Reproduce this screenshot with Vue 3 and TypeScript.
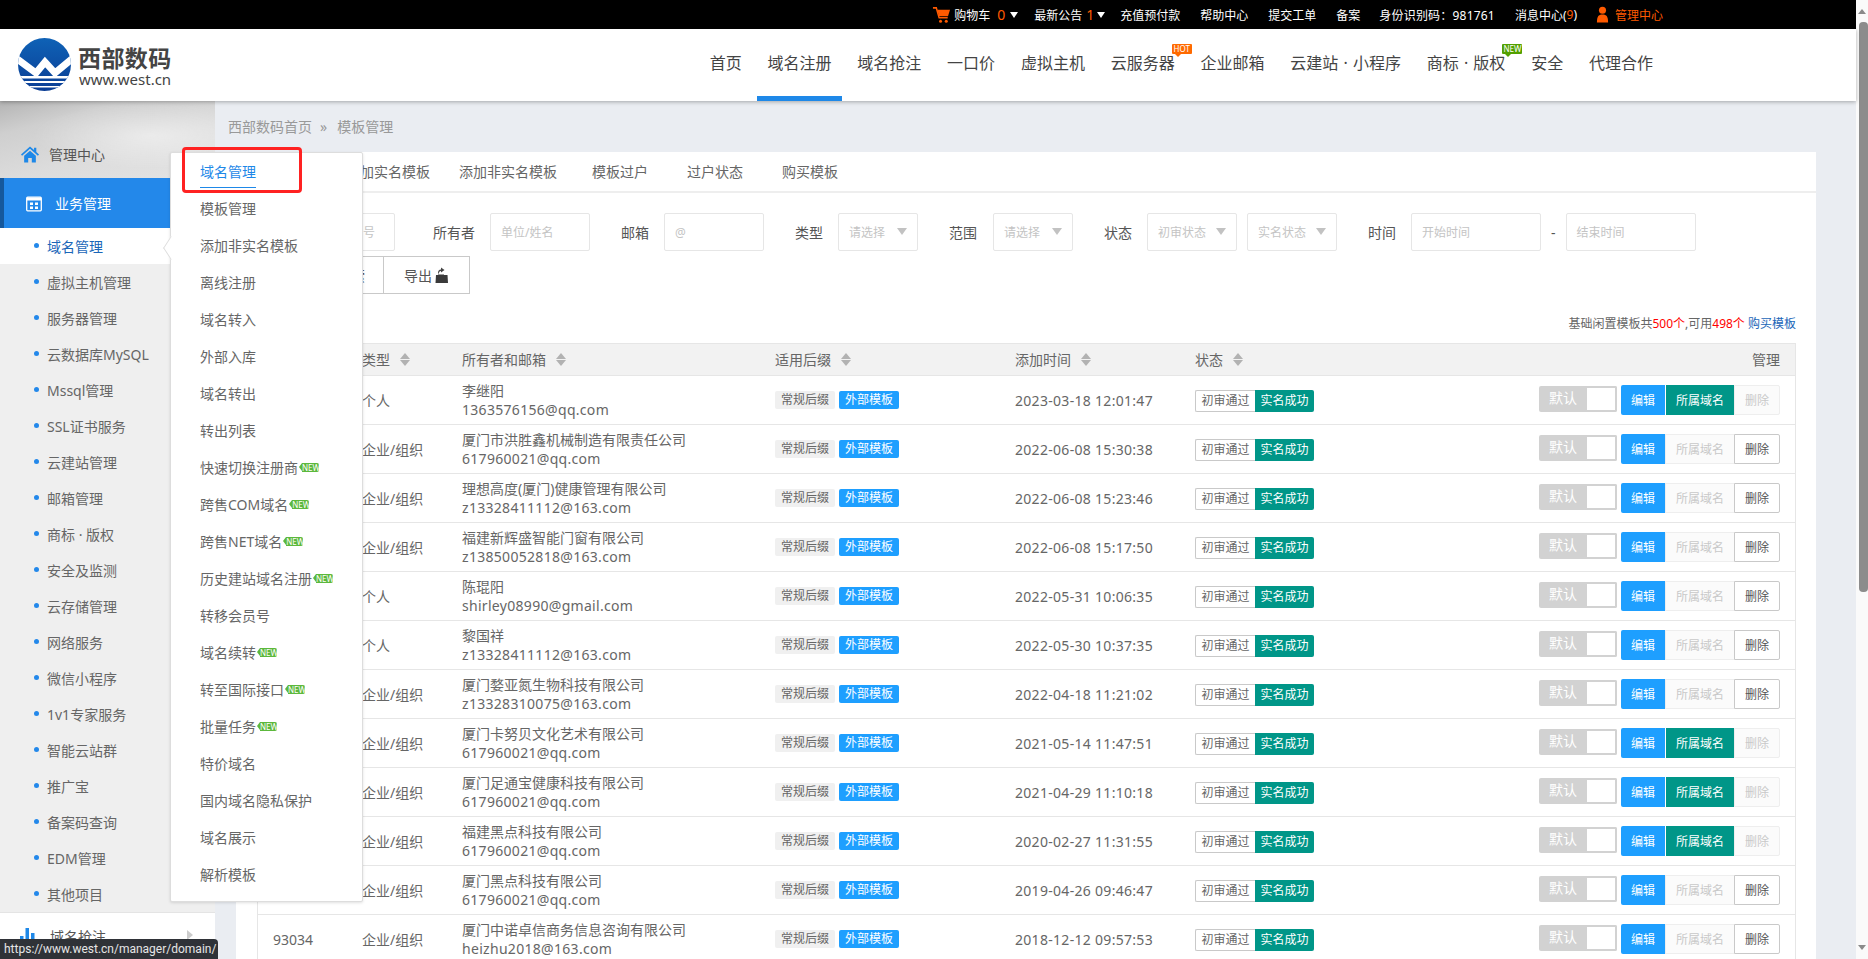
<template>
  <div class="page">
    <div class="site">
      <div class="topbar">
        <a class="top-item top-cart">
          <svg class="cart" viewBox="0 0 20 18" width="19" height="18">
            <path d="M1 1.500h3.500l3 10.500h9" fill="none" stroke="#ff5a00" stroke-width="1.600" />
            <path d="M5.500 3.500h13.500l-2.200 6.800H7.500z" fill="#ff5a00" />
            <circle cx="9" cy="15.500" r="1.600" fill="#ff5a00" />
            <circle cx="15" cy="15.500" r="1.600" fill="#ff5a00" />
          </svg>
          购物车<em class="count">0</em><i class="tri"></i>
        </a>
        <a class="top-item top-notice">最新公告<em class="count">1</em><i class="tri"></i></a>
        <a v-for="item in topLinks" :key="item" class="top-item">{{ item }}</a>
        <a class="top-item top-id">身份识别码：981761</a>
        <a class="top-item">消息中心(<span class="msg">9</span>)</a>
        <a class="top-item top-user">
          <svg viewBox="0 0 14 18" width="13" height="17">
            <circle cx="7" cy="4.500" r="3.800" fill="#ff5a00" />
            <path d="M1 17.500c0-6 1.500-8.500 6-8.500s6 2.500 6 8.500z" fill="#ff5a00" />
          </svg>
          管理中心
        </a>
      </div>

      <header class="header">
        <div class="logo">
          <svg class="logo-mark" viewBox="0 0 53 53" width="53" height="53">
            <defs>
              <clipPath id="logoClip"><circle cx="26.500" cy="26.500" r="26.500" /></clipPath>
              <linearGradient id="logoFill" x1="0" y1="0" x2="0" y2="1">
                <stop offset="0" stop-color="#0f62b6" />
                <stop offset="1" stop-color="#0a3d94" />
              </linearGradient>
            </defs>
            <g clip-path="url(#logoClip)">
              <rect width="53" height="53" fill="url(#logoFill)" />
              <path d="M-2 20l20 15 9-11 10 11 18-15" fill="none" stroke="#fff" stroke-width="7" />
              <rect y="38" width="53" height="2.500" fill="#fff" />
              <rect y="43" width="53" height="2" fill="#fff" />
              <rect y="48" width="53" height="1.500" fill="#fff" />
            </g>
          </svg>
          <div class="logo-text">
            <strong>西部数码</strong>
            <span>www.west.cn</span>
          </div>
        </div>
        <nav class="nav">
          <a v-for="item in navItems" :key="item.label" :class="['nav-item', { active: item.active }]">
            {{ item.label }}
            <b v-if="item.badge" :class="['nav-badge', `badge-${item.badge}`]">{{ item.badge }}</b>
          </a>
        </nav>
      </header>

      <div class="body">
        <aside class="sidebar">
          <div class="side-top">
            <div class="side-home">
              <svg viewBox="0 0 20 18" width="18" height="17">
                <path d="M10 0L0 9l1.200 1.300L10 2.500l8.800 7.800L20 9l-3-2.700V1.500h-2.500v2.600z" fill="#1e88e8" />
                <path d="M3.500 10.500L10 4.800l6.500 5.700V18H12v-5H8v5H3.500z" fill="#1e88e8" />
              </svg>
              管理中心
            </div>
          </div>
          <div class="side-group">
            <svg viewBox="0 0 16 16" width="16" height="17">
              <rect x="0.700" y="1.700" width="14.600" height="13.600" rx="1" fill="none" stroke="#fff" stroke-width="1.300" />
              <rect x="1" y="2" width="14" height="3" fill="#fff" />
              <rect x="4" y="7" width="3" height="2.500" fill="#fff" />
              <rect x="9" y="7" width="3" height="2.500" fill="#fff" />
              <rect x="4" y="11" width="3" height="2.500" fill="#fff" />
              <rect x="9" y="11" width="3" height="2.500" fill="#fff" />
            </svg>
            业务管理
          </div>
          <ul class="side-list">
            <li v-for="(item, i) in sideItems" :key="item" :class="{ current: i === 0 }">{{ item }}</li>
          </ul>
          <div class="side-next">
            <svg viewBox="0 0 18 16" width="18" height="16">
              <rect x="0" y="8" width="3.500" height="8" fill="#1e88e8" />
              <rect x="5.500" y="0" width="3.500" height="16" fill="#1e88e8" />
              <rect x="11" y="5" width="3.500" height="11" fill="#1e88e8" />
            </svg>
            域名抢注
            <i class="side-arrow"></i>
          </div>
        </aside>

        <main class="main">
          <div class="crumbs">
            <span>西部数码首页</span>
            <span class="crumb-sep">»</span>
            <span>模板管理</span>
          </div>

          <section class="panel">
            <div class="tabs">
              <a v-for="tab in tabs" :key="tab" class="tab">{{ tab }}</a>
            </div>

            <div class="filters">
              <div class="field field-first">
                <span class="fake-input w-id">模板编号</span>
              </div>
              <div class="field">
                <label>所有者</label>
                <span class="fake-input w-100">单位/姓名</span>
              </div>
              <div class="field">
                <label>邮箱</label>
                <span class="fake-input w-100">@</span>
              </div>
              <div class="field">
                <label>类型</label>
                <span class="fake-input fake-select w-80">请选择</span>
              </div>
              <div class="field field-range">
                <label>范围</label>
                <span class="fake-input fake-select w-80">请选择</span>
              </div>
              <div class="field">
                <label>状态</label>
                <span class="fake-input fake-select w-90">初审状态</span>
                <span class="fake-input fake-select w-90 tight">实名状态</span>
              </div>
              <div class="field">
                <label>时间</label>
                <span class="fake-input w-130">开始时间</span>
                <span class="dash">-</span>
                <span class="fake-input w-130">结束时间</span>
              </div>
            </div>

            <div class="actions">
              <button class="action-btn search-btn">搜索</button>
              <button class="action-btn export-btn">
                导出
                <svg viewBox="0 0 14 16" width="14" height="16">
                  <path d="M6 0.500l3.500 2.500-3.500 2.500V4C4.500 4 4 5 4 6.500H3C3 3.500 4 2.500 6 2.500z" fill="#444" />
                  <path d="M1 8h2v-.5h6V8h3.500l.5 8H0.500z" fill="#3a3a3a" />
                </svg>
              </button>
            </div>

            <p class="quota">
              基础闲置模板共<span class="red">500个</span>,可用<span class="red">498个</span>{{ ' ' }}<a class="buy">购买模板</a>
            </p>

            <div class="table-wrap">
              <table class="grid">
                <colgroup>
                  <col class="c-id" />
                  <col class="c-type" />
                  <col class="c-owner" />
                  <col class="c-suffix" />
                  <col class="c-time" />
                  <col class="c-status" />
                  <col />
                </colgroup>
                <thead>
                  <tr>
                    <th v-for="col in columns" :key="col">
                      <span class="th-inner">{{ col }}<i class="sort"></i></span>
                    </th>
                    <th class="th-manage">管理</th>
                  </tr>
                </thead>
                <tbody>
                  <tr v-for="(row, i) in rows" :key="i">
                    <td>{{ row.id }}</td>
                    <td>{{ row.type }}</td>
                    <td class="owner">
                      <div>{{ row.name }}</div>
                      <div class="latin">{{ row.email }}</div>
                    </td>
                    <td>
                      <span class="tag tag-gray">常规后缀</span>
                      <span class="tag tag-blue">外部模板</span>
                    </td>
                    <td class="latin">{{ row.time }}</td>
                    <td>
                      <div class="status-cell">
                        <span class="st st-line">初审通过</span>
                        <span class="st st-ok">实名成功</span>
                      </div>
                    </td>
                    <td>
                      <div class="manage">
                        <span class="switch"><b>默认</b><i></i></span>
                        <div class="btns">
                          <a class="btn btn-blue">编辑</a>
                          <template v-if="row.bound">
                            <a class="btn btn-green">所属域名</a>
                            <a class="btn btn-off">删除</a>
                          </template>
                          <template v-else>
                            <a class="btn btn-off btn-mid">所属域名</a>
                            <a class="btn btn-line">删除</a>
                          </template>
                        </div>
                      </div>
                    </td>
                  </tr>
                </tbody>
              </table>
            </div>
          </section>
        </main>

        <!-- 悬浮子菜单 -->
        <div class="flyout">
          <i class="flyout-arrow"></i>
          <a v-for="(item, i) in flyoutItems" :key="item.label" class="fly-item">
            <span :class="{ 'fly-current': i === 0 }">{{ item.label }}</span>
            <b v-if="item.isNew" class="new-tag">NEW</b>
          </a>
        </div>
        <div class="mark-box"></div>
      </div>
    </div>

    <div class="scrollbar">
      <i class="sb-up"></i>
      <i class="sb-thumb"></i>
      <i class="sb-down"></i>
    </div>

    <div class="status-url">https://www.west.cn/manager/domain/</div>
  </div>
</template>

<script setup lang="ts">
interface NavItem {
  label: string;
  active?: boolean;
  badge?: 'HOT' | 'NEW';
}

interface Row {
  id: string;
  type: string;
  name: string;
  email: string;
  time: string;
  bound: boolean;
}

const topLinks = ['充值预付款', '帮助中心', '提交工单', '备案'];

const navItems: NavItem[] = [
  { label: '首页' },
  { label: '域名注册', active: true },
  { label: '域名抢注' },
  { label: '一口价' },
  { label: '虚拟主机' },
  { label: '云服务器', badge: 'HOT' },
  { label: '企业邮箱' },
  { label: '云建站 · 小程序' },
  { label: '商标 · 版权', badge: 'NEW' },
  { label: '安全' },
  { label: '代理合作' }
];

const sideItems = [
  '域名管理', '虚拟主机管理', '服务器管理', '云数据库MySQL', 'Mssql管理', 'SSL证书服务', '云建站管理',
  '邮箱管理', '商标 · 版权', '安全及监测', '云存储管理', '网络服务', '微信小程序', '1v1专家服务',
  '智能云站群', '推广宝', '备案码查询', 'EDM管理', '其他项目'
];

const flyoutItems = [
  { label: '域名管理' },
  { label: '模板管理' },
  { label: '添加非实名模板' },
  { label: '离线注册' },
  { label: '域名转入' },
  { label: '外部入库' },
  { label: '域名转出' },
  { label: '转出列表' },
  { label: '快速切换注册商', isNew: true },
  { label: '跨售COM域名', isNew: true },
  { label: '跨售NET域名', isNew: true },
  { label: '历史建站域名注册', isNew: true },
  { label: '转移会员号' },
  { label: '域名续转', isNew: true },
  { label: '转至国际接口', isNew: true },
  { label: '批量任务', isNew: true },
  { label: '特价域名' },
  { label: '国内域名隐私保护' },
  { label: '域名展示' },
  { label: '解析模板' }
];

const tabs = ['模板管理', '添加实名模板', '添加非实名模板', '模板过户', '过户状态', '购买模板'];
const columns = ['ID', '类型', '所有者和邮箱', '适用后缀', '添加时间', '状态'];

const rows: Row[] = [
  { id: '', type: '个人', name: '李继阳', email: '1363576156@qq.com', time: '2023-03-18 12:01:47', bound: true },
  { id: '', type: '企业/组织', name: '厦门市洪胜鑫机械制造有限责任公司', email: '617960021@qq.com', time: '2022-06-08 15:30:38', bound: false },
  { id: '', type: '企业/组织', name: '理想高度(厦门)健康管理有限公司', email: 'z13328411112@163.com', time: '2022-06-08 15:23:46', bound: false },
  { id: '', type: '企业/组织', name: '福建新辉盛智能门窗有限公司', email: 'z13850052818@163.com', time: '2022-06-08 15:17:50', bound: false },
  { id: '', type: '个人', name: '陈琨阳', email: 'shirley08990@gmail.com', time: '2022-05-31 10:06:35', bound: false },
  { id: '', type: '个人', name: '黎国祥', email: 'z13328411112@163.com', time: '2022-05-30 10:37:35', bound: false },
  { id: '', type: '企业/组织', name: '厦门婺亚氮生物科技有限公司', email: 'z13328310075@163.com', time: '2022-04-18 11:21:02', bound: false },
  { id: '', type: '企业/组织', name: '厦门卡努贝文化艺术有限公司', email: '617960021@qq.com', time: '2021-05-14 11:47:51', bound: true },
  { id: '', type: '企业/组织', name: '厦门足通宝健康科技有限公司', email: '617960021@qq.com', time: '2021-04-29 11:10:18', bound: true },
  { id: '', type: '企业/组织', name: '福建黑点科技有限公司', email: '617960021@qq.com', time: '2020-02-27 11:31:55', bound: true },
  { id: '', type: '企业/组织', name: '厦门黑点科技有限公司', email: '617960021@qq.com', time: '2019-04-26 09:46:47', bound: false },
  { id: '93034', type: '企业/组织', name: '厦门中诺卓信商务信息咨询有限公司', email: 'heizhu2018@163.com', time: '2018-12-12 09:57:53', bound: false }
];
</script>

<style>
html,
body {
  margin: 0;
  overflow: hidden;
}
</style>

<style scoped>
* {
  box-sizing: border-box;
}

.page {
  position: relative;
  display: flex;
  height: 959px;
  overflow: hidden;
  font-family: "Noto Sans", "Noto Sans CJK SC", sans-serif;
  font-size: 14px;
  color: #666;
}

.site {
  display: flex;
  flex-direction: column;
  width: 1856px;
  flex: none;
}

/* 顶部黑条 */
.topbar {
  display: flex;
  align-items: center;
  justify-content: flex-end;
  gap: 20px;
  height: 29px;
  padding-right: 193px;
  background: #000;
  color: #fff;
  font-size: 12px;
  flex: none;
}

.top-item {
  display: flex;
  align-items: center;
  white-space: nowrap;
}

.top-cart {
  margin-right: -4px;
}

.top-notice {
  margin-right: -5px;
}

.top-notice .count {
  margin-left: 4px;
}

.top-notice .tri {
  margin-left: 3px;
}

.top-id {
  margin-left: -1px;
  letter-spacing: 0.2px;
}

.cart {
  margin-right: 3px;
}

.count {
  margin-left: 7px;
  color: #ff5a00;
  font-style: normal;
  font-size: 14px;
}

.tri {
  width: 0;
  height: 0;
  margin-left: 5px;
  border-left: 4px solid transparent;
  border-right: 4px solid transparent;
  border-top: 6px solid #fff;
}

.msg {
  color: #ff5a00;
}

.top-user {
  margin-left: -1px;
  color: #ff5a00;
  gap: 6px;
}

/* 头部导航 */
.header {
  position: relative;
  z-index: 3;
  display: flex;
  justify-content: space-between;
  height: 72px;
  padding-right: 193px;
  background: #fff;
  box-shadow: 0 1px 4px rgba(0, 0, 0, 0.3);
  flex: none;
}

.logo {
  display: flex;
  align-items: center;
  gap: 7px;
  padding-left: 18px;
}

.logo-mark {
  margin-top: -1px;
}

.logo-text {
  display: flex;
  flex-direction: column;
  color: #444;
}

.logo-text strong {
  font-size: 23px;
  line-height: 28px;
  letter-spacing: 0.4px;
}

.logo-text span {
  padding-left: 1px;
  font-size: 15px;
  line-height: 15px;
}

.nav {
  display: flex;
  gap: 5.800px;
}

.nav-item {
  position: relative;
  padding: 0 10px;
  line-height: 69px;
  height: 72px;
  font-size: 16px;
  color: #444;
  border-bottom: 5px solid transparent;
  white-space: nowrap;
  word-spacing: 1px;
}

.nav-item.active {
  border-bottom-color: #1e88e8;
}

.nav-badge {
  position: absolute;
  top: 15px;
  right: -7px;
  width: 20px;
  height: 10px;
  border-radius: 1px;
  color: #fff;
  font-size: 8px;
  font-weight: 400;
  line-height: 10px;
  text-align: center;
}

.nav-badge::after {
  content: "";
  position: absolute;
  left: 3px;
  bottom: -3px;
  border-left: 3px solid transparent;
  border-right: 3px solid transparent;
  border-top: 3px solid currentColor;
}

.badge-HOT {
  background: #ff6a00;
}

.badge-HOT::after {
  border-top-color: #ff6a00;
}

.badge-NEW {
  background: #52a000;
}

.badge-NEW::after {
  border-top-color: #52a000;
}

.body {
  position: relative;
  display: flex;
  flex: 1;
  min-height: 0;
  background: #eaedf2;
}

/* 左侧栏 */
.sidebar {
  width: 215px;
  flex: none;
  display: flex;
  flex-direction: column;
  background: #fff;
}

.side-top {
  display: flex;
  align-items: flex-end;
  height: 78px;
  background:
    radial-gradient(ellipse at 70% 45%, rgba(255, 255, 255, 0.45), transparent 55%),
    linear-gradient(165deg, #b4b4b4 0%, #cfcfcf 25%, #dcdcdc 60%, #e4e4e4 100%);
}

.side-home {
  display: flex;
  align-items: center;
  gap: 10px;
  height: 48px;
  padding-left: 21px;
  color: #555;
}

.side-group {
  display: flex;
  align-items: center;
  gap: 13px;
  height: 50px;
  padding-left: 22px;
  background: #2388ea;
  border-left: 4px solid #15589c;
  color: #fff;
  flex: none;
}

.side-list {
  margin: 0;
  padding: 0;
  list-style: none;
  background: #efefef;
  border-bottom: 1px solid #e4e4e4;
}

.side-list li {
  position: relative;
  height: 36px;
  padding: 1px 0 0 47px;
  line-height: 36px;
  white-space: nowrap;
}

.side-list li::before {
  content: "";
  position: absolute;
  left: 34px;
  top: 15px;
  width: 5px;
  height: 5px;
  border-radius: 50%;
  background: #2388ea;
}

.side-list li.current {
  background: #fff;
  color: #1a66b8;
}

.side-next {
  position: relative;
  display: flex;
  align-items: center;
  gap: 12px;
  height: 46px;
  padding-left: 20px;
  color: #555;
}

.side-arrow {
  position: absolute;
  left: 187px;
  top: 17px;
  border-top: 5px solid transparent;
  border-bottom: 5px solid transparent;
  border-left: 6px solid #ccc;
}

/* 主内容 */
.main {
  flex: 1;
  min-width: 0;
  padding: 0 40px 0 21px;
}

.crumbs {
  display: flex;
  align-items: center;
  height: 51px;
  padding-bottom: 1px;
  margin-left: -8px;
  color: #999;
}

.crumb-sep {
  margin: 0 10px 0 8px;
}

.panel {
  background: #fff;
  padding: 0 20px 0 21px;
  height: 820px;
}

.tabs {
  display: flex;
  height: 41px;
  margin: 0 -20px 0 -21px;
  padding-left: 25px;
  border-bottom: 2px solid #eee;
}

.tab {
  line-height: 39px;
  white-space: nowrap;
  margin-right: 35px;
}

.tab:nth-child(1),
.tab:nth-child(2) {
  margin-right: 29px;
}

.tab:nth-child(4),
.tab:nth-child(5) {
  margin-right: 39px;
}

.filters {
  display: flex;
  align-items: center;
  padding-top: 20px;
  margin-left: 59px;
}

.field {
  display: flex;
  align-items: center;
  gap: 15px;
  margin-left: 31px;
  white-space: nowrap;
  color: #555;
}

.field-first {
  margin-left: 0;
  margin-right: 7px;
}

.field-range {
  gap: 16px;
}

.fake-input {
  position: relative;
  display: block;
  height: 38px;
  padding-left: 10px;
  border: 1px solid #e6e6e6;
  border-radius: 2px;
  line-height: 38px;
  font-size: 12px;
  color: #c4c4c4;
  background: #fff;
}

.fake-select::after {
  content: "";
  position: absolute;
  right: 10px;
  top: 14px;
  border-left: 5.500px solid transparent;
  border-right: 5.500px solid transparent;
  border-top: 7px solid #c2c2c2;
}

.tight {
  margin-left: -5px;
}

.dash {
  margin: 0 -5px;
}

.w-id { width: 79px; }
.w-100 { width: 100px; }
.w-80 { width: 80px; }
.w-90 { width: 90px; }
.w-130 { width: 130px; }

.actions {
  display: flex;
  margin-top: 5px;
  margin-left: 42px;
}

.action-btn {
  height: 38px;
  border: 1px solid #c9c9c9;
  background: #fff;
  font: inherit;
  color: #555;
  padding: 0;
}

.search-btn {
  width: 84px;
  border-right: none;
  text-align: right;
  padding-right: 18px;
}

.export-btn {
  display: flex;
  align-items: center;
  justify-content: center;
  gap: 3px;
  width: 87px;
}

.quota {
  margin: 20px 0 9px;
  height: 20px;
  line-height: 20px;
  font-size: 12px;
  text-align: right;
  color: #666;
}

.red {
  color: #f00;
}

.buy {
  color: #1a66b8;
}

.table-wrap {
  border: 1px solid #e6e6e6;
  border-bottom: none;
}

.grid {
  width: 100%;
  table-layout: fixed;
  border-collapse: separate;
  border-spacing: 0;
}

.c-id { width: 89px; }
.c-type { width: 100px; }
.c-owner { width: 313px; }
.c-suffix { width: 240px; }
.c-time { width: 180px; }
.c-status { width: 200px; }

.grid th {
  height: 32px;
  padding: 0 15px 1px;
  background: #f2f2f2;
  border-bottom: 1px solid #e6e6e6;
  font-weight: 400;
  text-align: left;
  color: #666;
}

.grid th.th-manage {
  text-align: right;
}

.th-inner {
  display: inline-flex;
  align-items: center;
  gap: 10px;
}

.sort {
  position: relative;
  width: 10px;
  height: 13px;
}

.sort::before,
.sort::after {
  content: "";
  position: absolute;
  left: 0;
  border-left: 5px solid transparent;
  border-right: 5px solid transparent;
}

.sort::before {
  top: 0;
  border-bottom: 6px solid #b2b2b2;
}

.sort::after {
  bottom: 0;
  border-top: 6px solid #b2b2b2;
}

.grid td {
  height: 49px;
  padding: 0 15px;
  border-bottom: 1px solid #e6e6e6;
  white-space: nowrap;
}

.latin {
  letter-spacing: 0.3px;
}

.owner {
  line-height: 19px;
}

.tag {
  display: inline-block;
  width: 60px;
  height: 18px;
  margin: 0 0 2px;
  border-radius: 2px;
  font-size: 12px;
  line-height: 18px;
  text-align: center;
  vertical-align: middle;
}

.tag-gray {
  background: #f0f0f0;
}

.tag-blue {
  margin-left: 4px;
  background: #1e9fff;
  color: #fff;
}

.status-cell {
  display: flex;
  align-items: center;
  padding-top: 2px;
}

.st {
  height: 22px;
  font-size: 12px;
  line-height: 20px;
  text-align: center;
}

.st-line {
  width: 60px;
  border: 1px solid #c9c9c9;
  border-right: none;
  border-radius: 2px 0 0 2px;
  background: #fff;
}

.st-ok {
  width: 59px;
  line-height: 22px;
  background: #009688;
  color: #fff;
  border-radius: 0 2px 2px 0;
}

.manage {
  display: flex;
  align-items: center;
  justify-content: flex-end;
  gap: 4px;
}

.switch {
  display: flex;
  width: 78px;
  height: 26px;
  margin-bottom: 2px;
  border-radius: 2px;
  overflow: hidden;
}

.switch b {
  width: 48px;
  background: #d2d2d2;
  color: #fff;
  font-weight: 400;
  text-align: center;
  line-height: 24px;
}

.switch i {
  flex: 1;
  border: 2px solid #d2d2d2;
  border-left: none;
  background: #fff;
}

.btns {
  display: flex;
}

.btn {
  height: 30px;
  padding: 0 10px;
  font-size: 12px;
  line-height: 32px;
}

.btn-blue {
  width: 44px;
  background: #1e9fff;
  color: #fff;
  border-radius: 2px 0 0 2px;
}

.btn-green {
  margin-left: 1px;
  background: #009688;
  color: #fff;
}

.btn-off {
  border: 1px solid #eee;
  background: #fbfbfb;
  color: #c9c9c9;
  line-height: 30px;
  border-radius: 0 2px 2px 0;
}

.btn-mid {
  border-radius: 0;
  border-right: none;
}

.btn-line {
  border: 1px solid #c9c9c9;
  background: #fff;
  color: #555;
  line-height: 30px;
  border-radius: 0 2px 2px 0;
}

/* 悬浮菜单 */
.flyout {
  position: absolute;
  left: 170px;
  top: 51px;
  z-index: 4;
  width: 193px;
  height: 750px;
  background: #fff;
  border: 1px solid #ddd;
  border-radius: 2px;
  box-shadow: 0 1px 3px rgba(0, 0, 0, 0.12);
}

.flyout-arrow {
  position: absolute;
  left: -7px;
  top: 88px;
  width: 14px;
  height: 14px;
  background: #fff;
  border-left: 1px solid #ddd;
  border-bottom: 1px solid #ddd;
  transform: rotate(45deg) skew(12deg, 12deg);
}

.fly-item {
  position: relative;
  display: flex;
  align-items: center;
  height: 37px;
  padding-left: 29px;
  white-space: nowrap;
}

.fly-item:first-of-type {
  margin-top: -1px;
}

.fly-current {
  color: #1e88e8;
  border-bottom: 1px solid #1e88e8;
  line-height: 20px;
  padding-bottom: 5px;
  margin-top: 8px;
}

.new-tag {
  position: relative;
  width: 17px;
  height: 9px;
  margin-left: 4px;
  margin-top: 2px;
  background: #5cb83c;
  border-radius: 0 2px 2px 0;
  color: #fff;
  font-size: 8px;
  font-weight: 400;
  line-height: 9px;
  text-align: center;
}

.new-tag::before {
  content: "";
  position: absolute;
  left: -3px;
  top: 0;
  border-top: 4.500px solid transparent;
  border-bottom: 4.500px solid transparent;
  border-right: 3px solid #5cb83c;
}

.mark-box {
  position: absolute;
  left: 182px;
  top: 46px;
  z-index: 5;
  width: 120px;
  height: 46px;
  border: 3px solid #f22;
  border-radius: 4px;
}

/* 滚动条 */
.scrollbar {
  position: relative;
  flex: 1;
  background: #fafafa;
}

.sb-up,
.sb-down {
  position: absolute;
  left: 2px;
  border-left: 4.500px solid transparent;
  border-right: 4.500px solid transparent;
}

.sb-up {
  top: 9px;
  border-bottom: 5px solid #8a8a8a;
}

.sb-down {
  bottom: 9px;
  border-top: 5px solid #8a8a8a;
}

.sb-thumb {
  position: absolute;
  left: 3px;
  top: 22px;
  width: 9px;
  height: 570px;
  border-radius: 4px;
  background: #8c8c8c;
}

.status-url {
  position: absolute;
  left: 0;
  bottom: 0;
  z-index: 6;
  width: 218px;
  height: 20px;
  padding-left: 4px;
  background: #2f3237;
  border-radius: 0 4px 0 0;
  color: #e6e6e6;
  font-family: Roboto, "Noto Sans", sans-serif;
  font-size: 12px;
  line-height: 20px;
  white-space: nowrap;
}
</style>
